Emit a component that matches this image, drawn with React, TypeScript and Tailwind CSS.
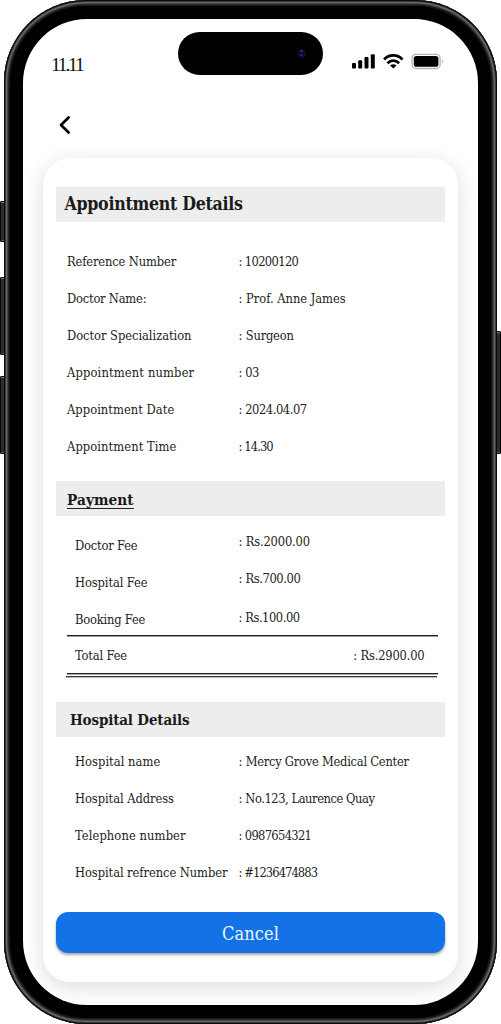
import type { ReactNode } from "react";

type Item = {
  label: string;
  value: string;
  labelClass: string;
  valueClass: string;
};

const appointment: Item[] = [
  { label: "Reference Number", value: ": 10200120", labelClass: "tracking-[-0.14px]", valueClass: "tracking-[-0.65px]" },
  { label: "Doctor Name:", value: ": Prof. Anne James", labelClass: "tracking-[-0.21px]", valueClass: "tracking-[-0.03px]" },
  { label: "Doctor Specialization", value: ": Surgeon", labelClass: "tracking-[-0.04px]", valueClass: "tracking-[-0.2px]" },
  { label: "Appointment number", value: ": 03", labelClass: "tracking-[0.15px]", valueClass: "tracking-[-0.5px]" },
  { label: "Appointment Date", value: ": 2024.04.07", labelClass: "tracking-[0.04px]", valueClass: "tracking-[-0.45px]" },
  { label: "Appointment Time", value: ": 14.30", labelClass: "tracking-[0.08px]", valueClass: "tracking-[-0.9px]" },
];

const hospital: Item[] = [
  { label: "Hospital name", value: ": Mercy Grove Medical Center", labelClass: "tracking-[0.04px]", valueClass: "tracking-[-0.25px]" },
  { label: "Hospital Address", value: ": No.123, Laurence Quay", labelClass: "tracking-[-0.06px]", valueClass: "tracking-[-0.44px]" },
  { label: "Telephone number", value: ": 0987654321", labelClass: "tracking-[0.1px]", valueClass: "tracking-[-0.68px]" },
  { label: "Hospital refrence Number", value: ": #1236474883", labelClass: "tracking-[-0.07px]", valueClass: "tracking-[-0.92px]" },
];

function SectionTitle({ className, children }: { className: string; children: ReactNode }) {
  return <h2 className={`flex h-[34.5px] items-center bg-[#ededed] text-[#1a1a1a] ${className}`}>{children}</h2>;
}

function Row({ item, className }: { item: Item; className: string }) {
  return (
    <div className={`flex h-[37px] items-center pt-[2px] ${className}`}>
      <span className={`flex-1 ${item.labelClass}`}>{item.label}</span>
      <span className={`w-[206.4px] ${item.valueClass}`}>{item.value}</span>
    </div>
  );
}

function StatusIcons() {
  return (
    <svg className="h-[18px] w-[92px]" viewBox="0 0 92 18" fill="none">
      <rect x="0" y="11.1" width="4" height="5.4" rx="1" fill="#000" />
      <rect x="6.2" y="8.2" width="4" height="8.3" rx="1" fill="#000" />
      <rect x="12.5" y="5.1" width="4" height="11.4" rx="1" fill="#000" />
      <rect x="18.8" y="2.3" width="4" height="14.2" rx="1" fill="#000" />
      <g stroke="#000" strokeWidth="2.7">
        <path d="M32.1 7.5C37.2 2.1 45.4 2.1 50.5 7.5" />
        <path d="M35.5 11.2C38.8 7.8 43.8 7.8 47.1 11.2" />
      </g>
      <path d="M41.3 16.6L38.1 13.6C40 11.9 42.6 11.9 44.5 13.6Z" fill="#000" />
      <rect x="60.1" y="2.3" width="28" height="14.2" rx="4" stroke="#b8b3b3" strokeWidth="1.3" />
      <rect x="61.8" y="4" width="24.6" height="10.8" rx="2.6" fill="#000" />
      <path d="M89.7 7.2C91.4 8 91.4 10.8 89.7 11.6Z" fill="#b8b3b3" />
    </svg>
  );
}

const sideButton =
  "absolute bg-[#2a2c2e] shadow-[inset_0_0_0_1px_#050505,inset_0_2px_0_0_#77797b,inset_0_-2px_0_0_#55575a]";

export default function App() {
  return (
    <div className="relative h-[1024px] w-[501px] overflow-hidden bg-white font-['DejaVu_Serif_Condensed','DejaVu_Serif',serif] text-[12.8px] leading-none whitespace-nowrap text-[#222]">
      <span className={`${sideButton} top-[201px] left-0 h-[41px] w-[6px] rounded-l-[2px]`} />
      <span className={`${sideButton} top-[277px] left-0 h-[78px] w-[6px] rounded-l-[2px]`} />
      <span className={`${sideButton} top-[376px] left-0 h-[78px] w-[6px] rounded-l-[2px]`} />
      <span className={`${sideButton} top-[331px] left-[495px] h-[123px] w-[5.5px] rounded-r-[2px]`} />

      <div className="relative ml-[4px] h-[1023.5px] w-[493px] rounded-[82px] bg-black px-[19px] pt-[19px] pb-[19px] shadow-[inset_0_0_0_1.2px_#090909,inset_0_0_0_2px_#45474a,inset_0_0_0_3.2px_#66686b,inset_0_0_0_4.4px_#3a3b3d,inset_0_0_0_6px_#17181a]">
        <div className="flex h-full flex-col overflow-hidden rounded-[64px] bg-white">
          <header className="relative flex h-[76px] shrink-0 justify-between pt-[33px] pr-[34px] pl-[28px]">
            <time className="pt-[3px] font-['Liberation_Serif',serif] text-[19.5px] tracking-[-2.2px] text-[#111]">11.11</time>
            <div className="absolute top-[13px] left-[155px] flex h-[42.5px] w-[145px] items-center justify-end rounded-full bg-black pr-[17px]">
              <span className="flex h-[9px] w-[9px] flex-col items-center justify-center gap-[2px] rounded-full bg-[#0a0a2c]">
                <i className="h-[2px] w-[3px] rounded-full bg-[#28287c]" />
                <i className="h-[2px] w-[3px] rounded-full bg-[#20206c]" />
              </span>
            </div>
            <StatusIcons />
          </header>

          <div className="flex h-[63px] shrink-0 pt-[20px] pl-[36px]">
            <svg className="h-[20px] w-[12px]" viewBox="0 0 12 20" fill="none" stroke="#000" strokeWidth="2.7" strokeLinecap="round" strokeLinejoin="round">
              <path d="M9.6 2.5L2 10L9.6 17.5" />
            </svg>
          </div>

          <main className="mr-[20.5px] ml-[20px] flex h-[824px] shrink-0 flex-col rounded-[27px] bg-white pt-[29px] pr-[12.5px] pl-[13px] shadow-[0_5px_22px_rgba(0,0,0,0.14)]">
            <SectionTitle className="pl-[8.5px] text-[17.6px] font-bold tracking-[-0.27px]">Appointment Details</SectionTitle>
            <div className="pt-[21px] pb-[16.5px]">
              {appointment.map((item) => (
                <Row key={item.label} item={item} className="pl-[11px]" />
              ))}
            </div>

            <SectionTitle className="pl-[11px] text-[15.2px] font-bold tracking-[0.1px]">
              <span className="border-b-[1.5px] border-[#222] pt-[5px]">Payment</span>
            </SectionTitle>
            <div className="pt-[11.5px]">
              <div className="flex h-[37px] items-center pt-[2px] pl-[19px]">
                <span className="flex-1 tracking-[-0.18px]">Doctor Fee</span>
                <span className="w-[206.4px] pb-[9px] tracking-[-0.18px]">: Rs.2000.00</span>
              </div>
              <div className="flex h-[37px] items-center pt-[2px] pl-[19px]">
                <span className="flex-1 tracking-[-0.1px]">Hospital Fee</span>
                <span className="w-[206.4px] pb-[9px] tracking-[-0.38px]">: Rs.700.00</span>
              </div>
              <div className="flex h-[34px] items-center pt-[2px] pl-[19px]">
                <span className="flex-1 pt-[3px] tracking-[-0.2px]">Booking Fee</span>
                <span className="w-[206.4px] pb-[2px] tracking-[-0.45px]">: Rs.100.00</span>
              </div>
            </div>
            <div className="mr-[7px] ml-[11px] flex h-[39px] items-center justify-between border-y border-[#222] pt-[3px] pr-[13.5px] pl-[8px] shadow-[0_1px_0_#aaa,inset_0_1px_0_#999]">
              <span className="tracking-[-0.15px]">Total Fee</span>
              <span className="tracking-[-0.18px]">: Rs.2900.00</span>
            </div>
            <div className="mt-[2px] mr-[8px] mb-[25px] ml-[9.5px] h-px bg-[#333] shadow-[0_1px_0_#bbb]" />

            <SectionTitle className="pt-[2px] pl-[14px] text-[15px] font-bold tracking-[-0.15px]">Hospital Details</SectionTitle>
            <div className="pt-[6px] pb-[21.5px]">
              {hospital.map((item) => (
                <Row key={item.label} item={item} className="pl-[19px]" />
              ))}
            </div>

            <button
              type="button"
              className="h-[41px] rounded-[12px] bg-[#1373e6] pt-[2px] text-[18px] tracking-[0.1px] text-[#eef5ff] shadow-[0_2px_3px_rgba(0,0,0,0.35)]"
            >
              Cancel
            </button>
          </main>
        </div>
      </div>
    </div>
  );
}
